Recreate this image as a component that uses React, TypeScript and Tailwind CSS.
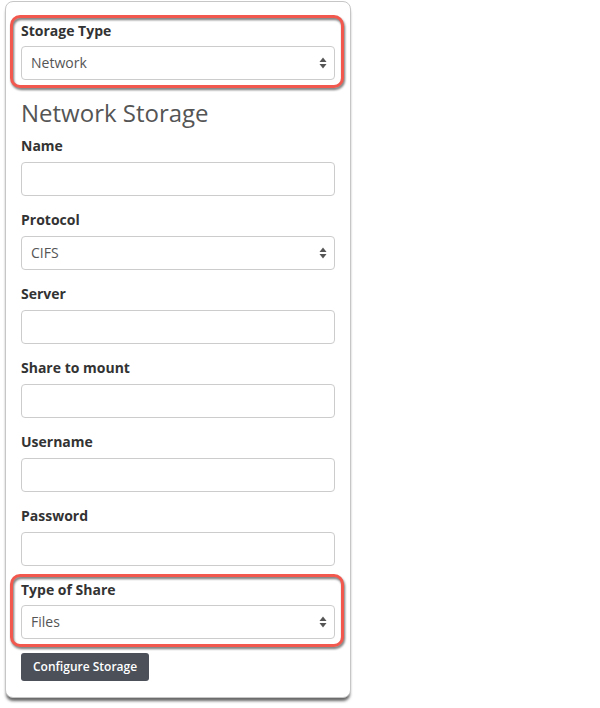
import React from "react";

const Arrows = () => (
  <svg width="8" height="12" viewBox="0 0 8 12" className="absolute right-[7px] top-1/2 -translate-y-1/2">
    <path d="M4 0.5 L7.5 5 L0.5 5 Z" fill="#555" />
    <path d="M4 11.5 L7.5 7 L0.5 7 Z" fill="#555" />
  </svg>
);

const Select = ({ value }: { value: string }) => (
  <div className="relative h-[34px] w-full rounded-[4px] border border-[#cccccc] bg-white flex items-center pl-[9px] pb-[2px] text-[14px] text-[#555]">
    {value}
    <Arrows />
  </div>
);

const Input = () => (
  <div className="h-[34px] w-full rounded-[4px] border border-[#cccccc] bg-white" />
);

const Label = ({ children, mb = "mb-[6px]" }: { children: React.ReactNode; mb?: string }) => (
  <div className={`text-[14px] leading-[20px] font-bold text-[#333] ${mb}`}>{children}</div>
);

const Field = ({ label, select }: { label: string; select?: string }) => (
  <div className="mb-[14px]">
    <Label>{label}</Label>
    {select ? <Select value={select} /> : <Input />}
  </div>
);

const Highlight = ({ children, className }: { children: React.ReactNode; className: string }) => (
  <div className={`relative ml-[-11px] mr-[-9px] pl-[11px] pr-[9px] pt-[6px] pb-[8px] ${className}`}>
    <div className="pointer-events-none absolute inset-0 rounded-[10px] border-[3px] border-[#f3584e] drop-shadow-[1px_2px_1px_rgba(0,0,0,0.55)]" />
    {children}
  </div>
);

export default function App() {
  return (
    <div className="min-h-[708px] bg-white" style={{ fontFamily: '"Open Sans", "Liberation Sans", sans-serif' }}>
      <div className="ml-[5px] mt-[1px] w-[346px] rounded-[8px] border border-[#c6c6c6] bg-white px-[15px] pb-[16px] shadow-[0_4px_3px_-1px_rgba(0,0,0,0.6)]">
        <Highlight className="mt-[13px]">
          <Label mb="mb-[5px]">Storage Type</Label>
          <Select value="Network" />
        </Highlight>
        <div className="mt-[10px] mb-[8px] text-[24px] leading-[30px] text-[#555]">Network Storage</div>
        <Field label="Name" />
        <Field label="Protocol" select="CIFS" />
        <Field label="Server" />
        <Field label="Share to mount" />
        <Field label="Username" />
        <div>
          <Label>Password</Label>
          <Input />
        </div>
        <Highlight className="mt-[8px]">
          <Label mb="mb-[5px]">Type of Share</Label>
          <Select value="Files" />
        </Highlight>
        <button className="mt-[6px] h-[28px] rounded-[3px] bg-[#4b5059] px-[12px] text-[12px] font-semibold text-white">
          Configure Storage
        </button>
      </div>
    </div>
  );
}
